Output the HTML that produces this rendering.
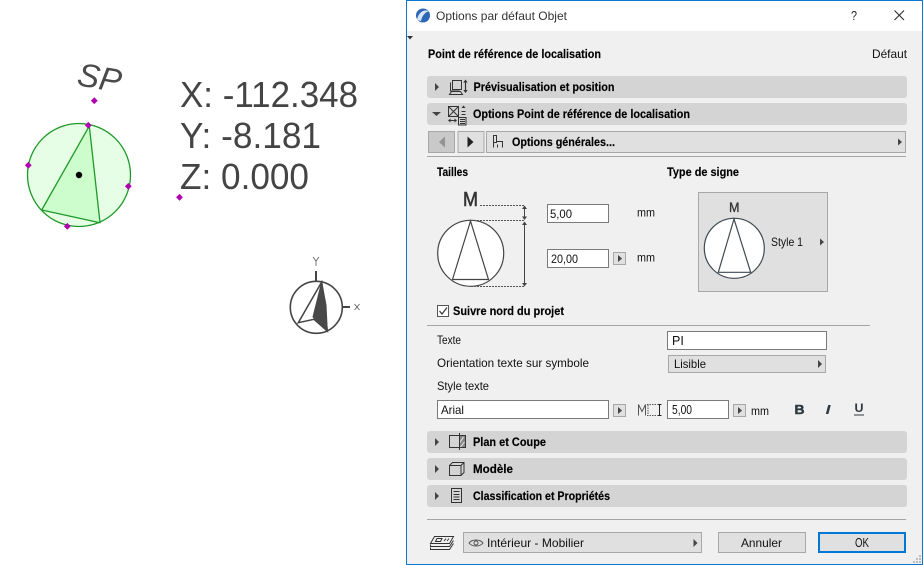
<!DOCTYPE html>
<html lang="fr"><head><meta charset="utf-8"><title>Options par défaut Objet</title>
<style>
html,body{margin:0;padding:0;background:#fff;width:923px;height:565px;overflow:hidden}
svg{display:block}
text{font-family:"Liberation Sans",sans-serif;font-size:12px;fill:#111}
.b{font-weight:bold;font-size:11.5px;fill:#000;stroke:#000;stroke-width:0.15}
.big{font-size:36px;fill:#444}
.ic{fill:none;stroke:#333;stroke-width:1}
.btn{fill:#e0e0e0;stroke:#a8a8a8;stroke-width:1}
.inp{fill:#fff;stroke:#7a7a7a;stroke-width:1}
.pn{fill:#d4d4d4}
.sep{stroke:#a6a6a6;stroke-width:1}
.tri{fill:#444}
.m{fill:#b000b0}
.dot{stroke:#555;stroke-width:1;stroke-dasharray:2 1;fill:none}
</style></head><body>
<svg width="923" height="565" viewBox="0 0 923 565" xmlns="http://www.w3.org/2000/svg">
<rect width="923" height="565" fill="#fff"/>

<!-- Left drawing -->
<circle cx="79" cy="175" r="51.5" fill="#e6fde6" stroke="#1f9a28" stroke-width="1.3"/>
<path d="M89.3 126L41.7 210L100 222.7Z" fill="#cdfccd" stroke="#1f9a28" stroke-width="1.3" stroke-linejoin="round"/>
<circle cx="79" cy="175" r="3.200" fill="#000"/>
<path class="m" d="M94.3 97.3l3.4 3.4-3.4 3.4-3.4-3.4zM88.3 121.9l3.4 3.4-3.4 3.4-3.4-3.4zM28.3 161.9l3.4 3.4-3.4 3.4-3.4-3.4zM128.3 182.9l3.4 3.4-3.4 3.4-3.4-3.4zM67.3 222.9l3.4 3.4-3.4 3.4-3.4-3.4zM179.5 193.9l3.4 3.4-3.4 3.4-3.4-3.4z"/>
<text transform="translate(76 85) rotate(10)" style="font-size:33px;font-style:italic;fill:#4a4a4a" textLength="44" lengthAdjust="spacingAndGlyphs">SP</text>
<text class="big" x="180" y="107" textLength="178" lengthAdjust="spacingAndGlyphs">X: -112.348</text>
<text class="big" x="180" y="148" textLength="141" lengthAdjust="spacingAndGlyphs">Y: -8.181</text>
<text class="big" x="180" y="189" textLength="129" lengthAdjust="spacingAndGlyphs">Z: 0.000</text>

<!-- small symbol -->
<circle cx="316.3" cy="307.3" r="26" fill="#fff" stroke="#444" stroke-width="1.6"/>
<path d="M321.7 282L298.3 322.7L314 319.3L327.3 331Z" fill="#fff" stroke="#444" stroke-width="1.5"/>
<path d="M321.700 282L313 317L327.300 331L326 305Z" fill="#484848" stroke="#484848"/>
<path d="M316 271v10M343 307h7" stroke="#444" stroke-width="2" fill="none"/>
<path d="M313 257l3 4 3-4M316 261v5M354.500 304l5 6M359.500 304l-5 6" stroke="#555" stroke-width="0.8" fill="none"/>

<!-- Dialog -->
<rect x="406.500" y="0.500" width="516" height="564" fill="#f0f0f0" stroke="#0a78d0" stroke-width="1"/>
<rect x="407" y="1" width="515" height="30" fill="#fff"/>
<path d="M407 36h6l-3 3.500z" fill="#333"/>
<circle cx="423" cy="15.500" r="7" fill="#2d67b8"/>
<path d="M417 20c1-7 6-11 12-9-3 1-7 4-8 10z" fill="#d8e6f7"/>
<text x="436" y="20" style="fill:#333" textLength="131" lengthAdjust="spacingAndGlyphs">Options par défaut Objet</text>
<text x="851" y="20" style="font-size:12.500px;fill:#222" textLength="6" lengthAdjust="spacingAndGlyphs">?</text>
<path d="M894.500 10.500l9.500 9.500M904 10.500l-9.500 9.500" stroke="#222" stroke-width="1" fill="none"/>

<text class="b" x="428" y="58" textLength="173" lengthAdjust="spacingAndGlyphs">Point de référence de localisation</text>
<text x="872" y="58" textLength="35" lengthAdjust="spacingAndGlyphs">Défaut</text>

<!-- panel 1 -->
<rect class="pn" x="427" y="76" width="480" height="22" rx="3"/>
<path class="tri" d="M435 83l4 4-4 4z"/>
<path class="ic" d="M452.500 80.500h9v9h-9zM450.500 82.500v8.500h9M449.500 94.500l2-3h9l2 3z"/>
<path d="M465.500 82v9" stroke="#333" stroke-width="1.200" fill="none"/>
<path d="M465.500 79.500l2.200 3h-4.400zM465.500 93l2.200-3h-4.400z" fill="#333"/>
<text class="b" x="473.500" y="91" textLength="141" lengthAdjust="spacingAndGlyphs">Prévisualisation et position</text>

<!-- panel 2 -->
<rect class="pn" x="427" y="103" width="480" height="22" rx="3"/>
<path class="tri" d="M432 112h9l-4.500 4z"/>
<path class="ic" d="M448.500 106.500h10v10h-10zM449 107l9 9M458 107l-9 9"/>
<path d="M458.500 117.500h7.500v7.500h-7.500zM460 119.500h5M460 121.500h5M460 123.500h5M461.500 111.500h4M461.500 114.500h4M449 120.500h7" stroke="#333" stroke-width="1" fill="none"/>
<path d="M463.500 105.500l2 2.500h-4zM448 120.500l2.500-2v4zM457 120.500l-2.500-2v4z" fill="#333"/>
<text class="b" x="473" y="118" textLength="217" lengthAdjust="spacingAndGlyphs">Options Point de référence de localisation</text>

<!-- toolbar -->
<rect x="428.500" y="131.500" width="26" height="21" fill="#c9c9c9" stroke="#a8a8a8"/>
<path d="M445 136.500v11l-6-5.500z" fill="#939393"/>
<rect class="btn" x="458" y="131.500" width="26" height="21"/>
<path d="M467.500 136.500v11l6-5.500z" fill="#222"/>
<rect class="btn" x="486.500" y="131.500" width="419" height="21"/>
<path class="ic" d="M493.500 135.500h3v7h-3zM496.500 141.500h6v6M493.500 142.500v5M497.500 144.500v3"/>
<text class="b" x="512" y="146" textLength="103" lengthAdjust="spacingAndGlyphs">Options générales...</text>
<path class="tri" d="M898 138.500l4 3.500-4 3.500z"/>
<line class="sep" x1="427" y1="156.500" x2="906" y2="156.500"/>

<!-- Tailles -->
<text class="b" x="437" y="176" textLength="31" lengthAdjust="spacingAndGlyphs">Tailles</text>
<text x="463" y="206" style="font-size:20px;fill:#333;stroke:#333;stroke-width:0.6" textLength="15" lengthAdjust="spacingAndGlyphs">M</text>
<circle cx="470.700" cy="253.300" r="33" fill="#fff" stroke="#444" stroke-width="1.200"/>
<path d="M470.500 221L452.500 279.500H488.500Z" fill="#fff" stroke="#444" stroke-width="1.200"/>
<path class="dot" d="M480 205.500h45M471 220.500h54M471 286.500h54"/>
<path d="M524.500 207v12M524.500 223v62" stroke="#444" fill="none"/>
<path d="M524.500 205.500l2.500 3.500h-5zM524.500 220l2.500-3.500h-5zM524.500 221.500l2.500 3.500h-5zM524.500 286.500l2.500-3.500h-5z" fill="#444"/>
<rect class="inp" x="547.500" y="204.500" width="61" height="18"/>
<text x="550" y="218" textLength="22" lengthAdjust="spacingAndGlyphs">5,00</text>
<text x="637" y="216.500" textLength="18" lengthAdjust="spacingAndGlyphs">mm</text>
<rect class="inp" x="547.500" y="249.500" width="61" height="18"/>
<text x="551" y="263" textLength="27" lengthAdjust="spacingAndGlyphs">20,00</text>
<rect class="btn" x="613.500" y="252.500" width="12" height="12"/>
<path class="tri" d="M618 255l4 3.500-4 3.500z"/>
<text x="637" y="261.500" textLength="18" lengthAdjust="spacingAndGlyphs">mm</text>

<!-- checkbox -->
<rect x="437.500" y="305.500" width="11" height="11" fill="#fff" stroke="#555"/>
<path d="M439.500 311l2.500 3 5-6.500" stroke="#333" stroke-width="1.200" fill="none"/>
<text class="b" x="453" y="315" textLength="111" lengthAdjust="spacingAndGlyphs">Suivre nord du projet</text>
<line class="sep" x1="427" y1="325.500" x2="870" y2="325.500"/>

<!-- Type de signe -->
<text class="b" x="667" y="176" textLength="72" lengthAdjust="spacingAndGlyphs">Type de signe</text>
<rect class="btn" x="698.500" y="192.500" width="129" height="99"/>
<text x="729" y="212" style="font-size:14px;fill:#333;stroke:#333;stroke-width:0.3" textLength="10.500" lengthAdjust="spacingAndGlyphs">M</text>
<circle cx="734.300" cy="248.300" r="30" fill="#fff" stroke="#3f4a50" stroke-width="1.200"/>
<path d="M734 219L718.300 272.300H750.700Z" fill="#fff" stroke="#3f4a50" stroke-width="1.200"/>
<text x="771" y="246" textLength="32" lengthAdjust="spacingAndGlyphs">Style 1</text>
<path class="tri" d="M820 238.500l4 3.500-4 3.500z"/>

<!-- text section -->
<text x="437" y="344" textLength="24" lengthAdjust="spacingAndGlyphs">Texte</text>
<rect class="inp" x="667.500" y="331.500" width="159" height="18"/>
<text x="672" y="345" style="font-size:12.500px">PI</text>
<text x="437" y="367" textLength="152" lengthAdjust="spacingAndGlyphs">Orientation texte sur symbole</text>
<rect class="btn" x="668.500" y="355.500" width="157" height="17"/>
<text x="674" y="368" textLength="32" lengthAdjust="spacingAndGlyphs">Lisible</text>
<path class="tri" d="M818 360l4 4-4 4z"/>
<text x="437" y="390" textLength="52" lengthAdjust="spacingAndGlyphs">Style texte</text>
<rect class="inp" x="437.500" y="400.500" width="171" height="18"/>
<text x="441" y="414" textLength="23" lengthAdjust="spacingAndGlyphs">Arial</text>
<rect class="btn" x="613.500" y="404.500" width="12" height="12"/>
<path class="tri" d="M618 407l4 3.500-4 3.500z"/>
<path d="M638.500 415.500v-11l3.500 7 3.500-7v11" stroke="#555" fill="none"/>
<path d="M647 404.500h10M647 415.500h10M648 405v10" stroke="#555" stroke-dasharray="1.500 1" fill="none"/>
<path d="M659.500 405v10M657.500 404.500h4M657.500 415.500h4" stroke="#222" fill="none"/>
<rect class="inp" x="667.500" y="400.500" width="61" height="18"/>
<text x="672" y="414" style="font-size:12.500px" textLength="20" lengthAdjust="spacingAndGlyphs">5,00</text>
<rect class="btn" x="733.500" y="404.500" width="12" height="12"/>
<path class="tri" d="M738 407l4 3.500-4 3.500z"/>
<text x="751" y="415" textLength="18" lengthAdjust="spacingAndGlyphs">mm</text>
<text x="794.500" y="414" style="font-size:13px;font-weight:bold;fill:#2f3a40;stroke:#2f3a40;stroke-width:0.5" textLength="10" lengthAdjust="spacingAndGlyphs">B</text>
<text x="825.500" y="414" style="font-size:13px;font-weight:bold;font-style:italic;fill:#2f3a40" textLength="5" lengthAdjust="spacingAndGlyphs">I</text>
<text x="854.500" y="412" style="font-size:12px;font-weight:bold;fill:#2f3a40" textLength="9" lengthAdjust="spacingAndGlyphs">U</text>
<line x1="854" y1="415" x2="864" y2="415" stroke="#2f3a40" stroke-width="1"/>

<!-- panels bottom -->
<rect class="pn" x="427" y="431" width="480" height="22" rx="3"/>
<path class="tri" d="M435 438l4 4-4 4z"/>
<path class="ic" d="M449.500 435.500h16v12h-16z"/>
<path d="M459 436h6v11h-6z" fill="#888"/>
<path d="M460.500 447l4-5M459.500 443l4-6" stroke="#eee" fill="none"/>
<path d="M459.500 433v17" stroke="#333" fill="none"/>
<text class="b" x="473" y="446" textLength="73" lengthAdjust="spacingAndGlyphs">Plan et Coupe</text>

<rect class="pn" x="427" y="458" width="480" height="22" rx="3"/>
<path class="tri" d="M435 465l4 4-4 4z"/>
<path class="ic" d="M449.500 465.500l3-3h11.500v10l-3 3h-11.500zM449.500 465.500h11.500v10M461 465.500l3-3"/>
<text class="b" x="473" y="473" textLength="40" lengthAdjust="spacingAndGlyphs">Modèle</text>

<rect class="pn" x="427" y="485" width="480" height="22" rx="3"/>
<path class="tri" d="M435 492l4 4-4 4z"/>
<path class="ic" d="M451.500 488.500h10v14h-10zM453.500 491.500h6M453.500 494.500h6M453.500 497h6M453.500 499.500h6"/>
<text class="b" x="473" y="500" textLength="137" lengthAdjust="spacingAndGlyphs">Classification et Propriétés</text>

<line class="sep" x1="427" y1="519.500" x2="906" y2="519.500"/>

<!-- footer -->
<path class="ic" d="M434.500 536.500h19l-4 7h-19zM437 538.500h5l-1.500 3h-5zM444 541l2-2.500M447 541l2-2.500M430.500 544.500v2h19l4-6M430.500 547.500v2h19l4-6"/>
<rect class="btn" x="463.500" y="532.500" width="238" height="20"/>
<path d="M469 543c3-4 11-4 14 0-3 4-11 4-14 0z" fill="none" stroke="#555"/>
<circle cx="476" cy="543" r="2" fill="none" stroke="#555"/>
<text x="487" y="547" textLength="97" lengthAdjust="spacingAndGlyphs">Intérieur - Mobilier</text>
<path class="tri" d="M693.500 539l4 4-4 4z"/>
<rect class="btn" x="718.500" y="532.500" width="87" height="20"/>
<text x="741" y="547" textLength="41" lengthAdjust="spacingAndGlyphs">Annuler</text>
<rect x="819" y="533" width="86" height="19" fill="#e0e0e0" stroke="#0078d7" stroke-width="2"/>
<text x="855" y="547" style="font-size:12.500px" textLength="14" lengthAdjust="spacingAndGlyphs">OK</text>
<path d="M919 555h2v2h-2zM916 558h2v2h-2zM919 558h2v2h-2zM913 561h2v2h-2zM916 561h2v2h-2zM919 561h2v2h-2z" fill="#bdbdbd"/>
</svg>
</body></html>
